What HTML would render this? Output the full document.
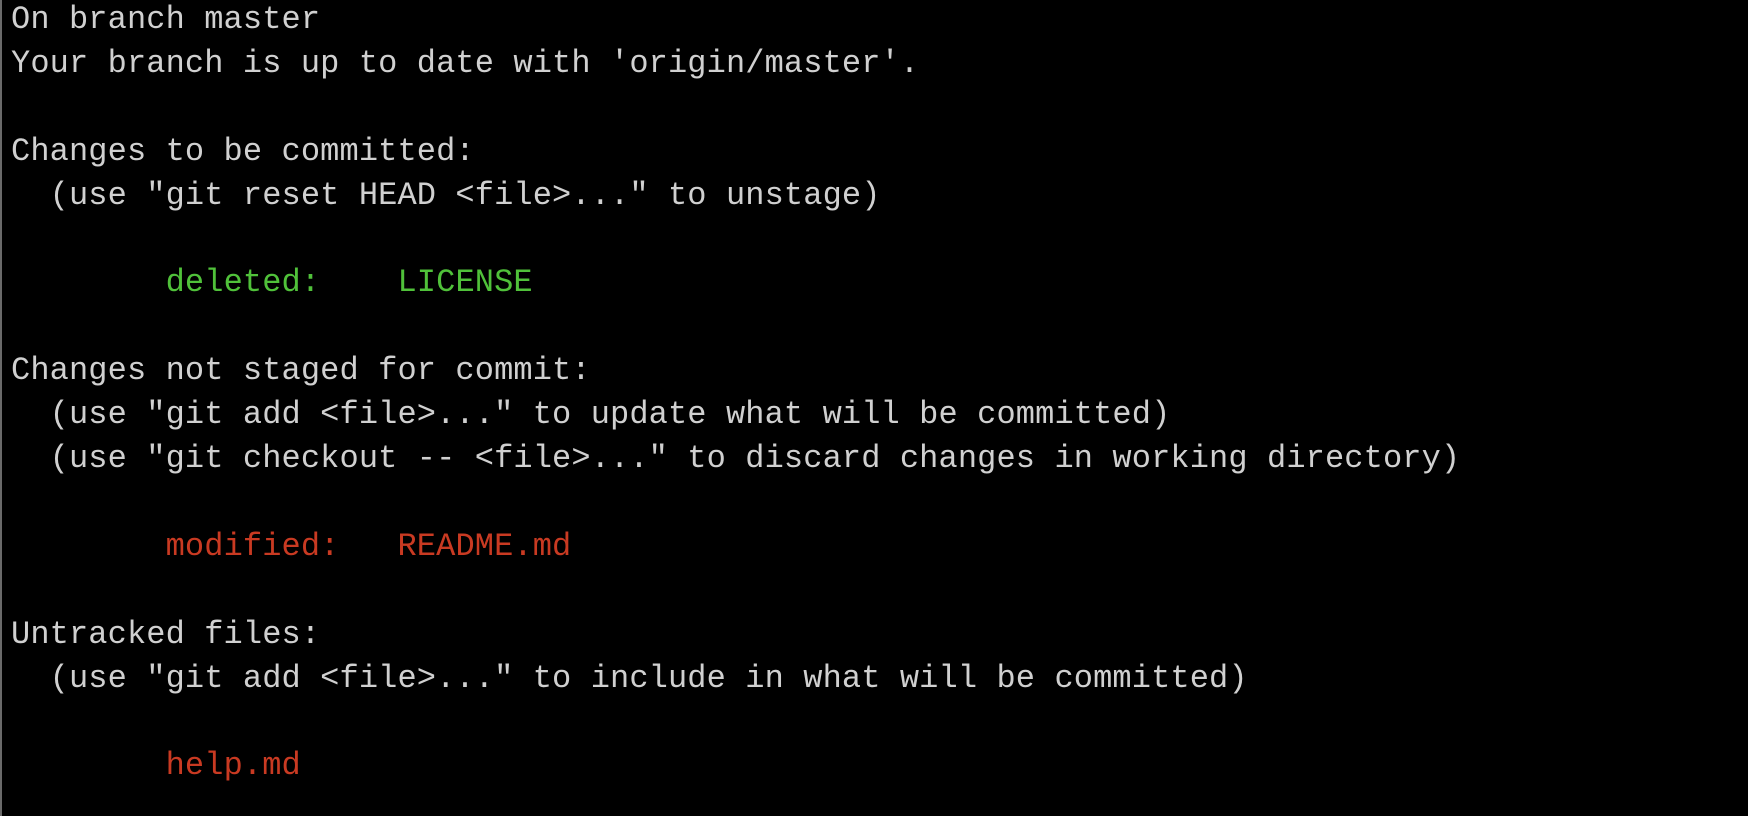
<!DOCTYPE html>
<html><head><style>
html,body{margin:0;padding:0;background:#000;width:1748px;height:816px;overflow:hidden}
.b{position:absolute;left:0;top:0;width:2px;height:816px;background:#6a6a6a}
pre{position:absolute;left:11px;top:-2px;margin:0;font-family:"Liberation Mono",monospace;font-size:32px;line-height:43.9px;letter-spacing:0.12px;color:#d0d0d0;white-space:pre}
.g{color:#50c13a}.r{color:#c93a22}
</style></head><body><div class="b"></div><pre>On branch master
Your branch is up to date with 'origin/master'.

Changes to be committed:
  (use "git reset HEAD &lt;file&gt;..." to unstage)

        <span class="g">deleted:    LICENSE</span>

Changes not staged for commit:
  (use "git add &lt;file&gt;..." to update what will be committed)
  (use "git checkout -- &lt;file&gt;..." to discard changes in working directory)

        <span class="r">modified:   README.md</span>

Untracked files:
  (use "git add &lt;file&gt;..." to include in what will be committed)

        <span class="r">help.md</span>
</pre></body></html>
